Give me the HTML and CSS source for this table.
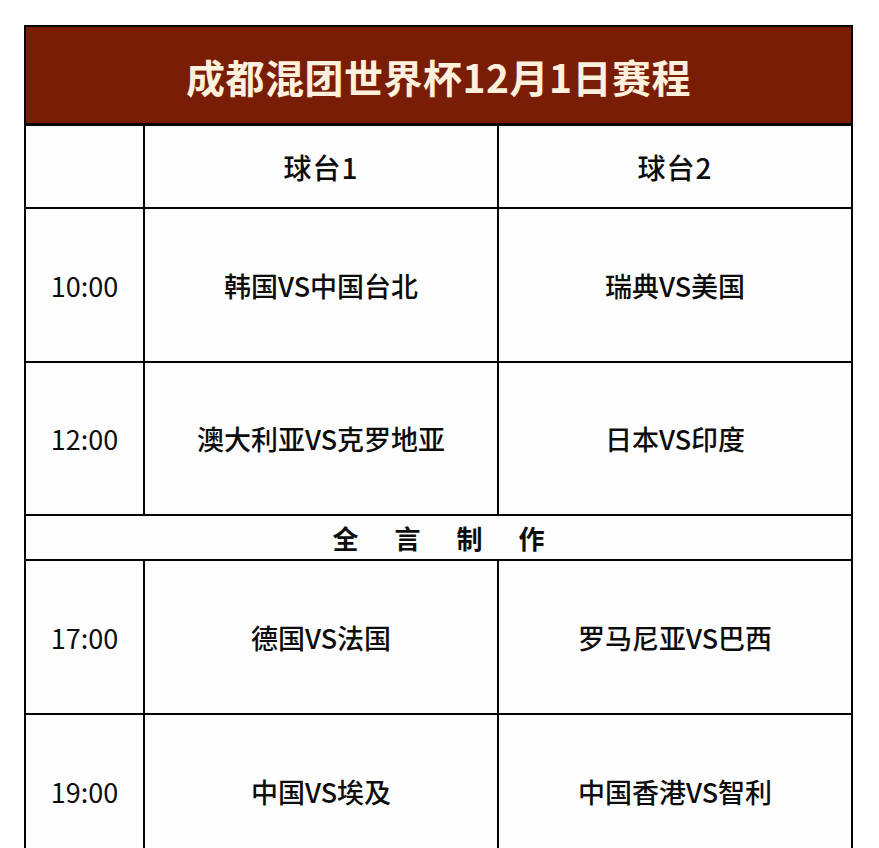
FILE: index.html
```html
<!DOCTYPE html>
<html lang="zh-CN">
<head>
<meta charset="utf-8">
<title>成都混团世界杯12月1日赛程</title>
<link rel="stylesheet" href="styles.css">
</head>
<body>
<div class="page">
  <div class="schedule">
    <div class="title">成都混团世界杯12月1日赛程</div>
    <div class="cell head"></div>
    <div class="cell head">球台1</div>
    <div class="cell head">球台2</div>

    <div class="cell time">10:00</div>
    <div class="cell match">韩国VS中国台北</div>
    <div class="cell match">瑞典VS美国</div>

    <div class="cell time">12:00</div>
    <div class="cell match">澳大利亚VS克罗地亚</div>
    <div class="cell match">日本VS印度</div>

    <div class="cell note">全言制作</div>

    <div class="cell time">17:00</div>
    <div class="cell match">德国VS法国</div>
    <div class="cell match">罗马尼亚VS巴西</div>

    <div class="cell time">19:00</div>
    <div class="cell match">中国VS埃及</div>
    <div class="cell match">中国香港VS智利</div>
  </div>
</div>
</body>
</html>
```
FILE: styles.css
```css
html, body {
  margin: 0;
  padding: 0;
  background: #ffffff;
}
body {
  font-family: "Noto Sans CJK SC", "Noto Sans", sans-serif;
  color: #0d0d0d;
  overflow: hidden;
  height: 848px;
}
.page {
  padding: 25px 0 0 24px;
}
.schedule {
  width: 829px;
  box-sizing: border-box;
  display: grid;
  grid-template-columns: 117px 352px 352px;
  grid-template-rows: 97px 81px 152px 151px 43px 152px 152px;
  gap: 2px;
  padding: 2px;
  background: #050505;
}
.title {
  grid-column: 1 / 4;
  background: #7a1d06;
  color: #fdf0dc;
  font-size: 39px;
  font-weight: 700;
  display: flex;
  align-items: center;
  justify-content: center;
  letter-spacing: 0.5px;
  margin-bottom: 1px;
  padding-top: 2px;
}
.cell {
  background: #fdfdfd;
  display: flex;
  align-items: center;
  justify-content: center;
  font-size: 27px;
}
.head {
  font-weight: 500;
  font-size: 28px;
  letter-spacing: 1px;
}
.time {
  font-weight: 400;
  font-size: 27px;
}
.match {
  font-weight: 500;
}
.note {
  grid-column: 1 / 4;
  font-weight: 700;
  font-size: 26px;
  letter-spacing: 36px;
  padding-left: 36px;
}
```
